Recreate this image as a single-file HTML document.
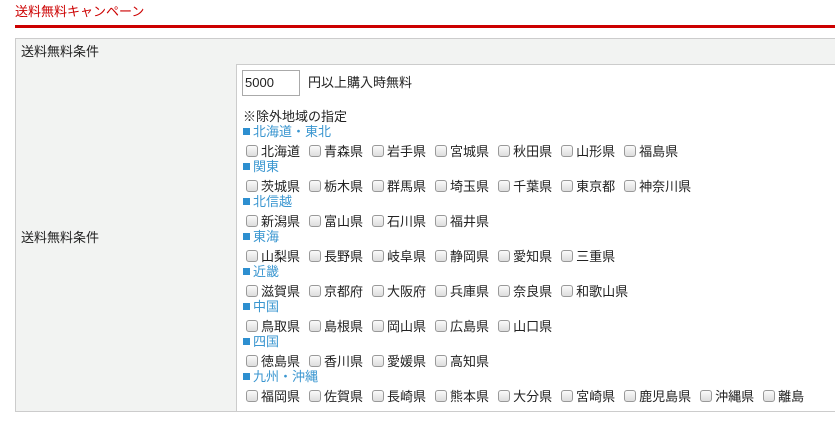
<!DOCTYPE html>
<html><head><meta charset="utf-8"><style>
*{margin:0;padding:0;box-sizing:border-box}
body{width:835px;height:432px;background:#fff;font-family:"Liberation Sans","Noto Sans CJK JP",sans-serif;font-size:13px;color:#222;position:relative;overflow:hidden}
.t{position:absolute;left:15px;top:3px;color:#cc0000;font-size:13px;line-height:18px}
.rl{position:absolute;left:15px;top:25px;width:830px;height:3px;background:#cc0000}
.hd{position:absolute;left:15px;top:38px;width:830px;height:27px;background:#f2f3f2;border:1px solid #ccc;padding:3px 0 0 5px;line-height:19px}
.lc{position:absolute;left:15px;top:64px;width:222px;height:348px;background:#f2f3f2;border:1px solid #ccc;border-top:none}
.lc span{position:absolute;left:5px;top:163px}
.bot{position:absolute;left:236px;top:411px;width:600px;height:1px;background:#ccc}
.inp{position:absolute;left:242px;top:70px;width:58px;height:26px;border:1px solid #aaa;padding:0 0 0 2px;line-height:24px}
.yen{position:absolute;left:308px;top:74px;line-height:18px}
.ex{position:absolute;left:243px;top:109px;line-height:16px}
.rg{position:absolute;left:243px;color:#3a96d0;line-height:15px;font-size:13px}
.rg:before{content:"";display:inline-block;width:7px;height:7px;background:#2d8fd0;margin-right:3px;vertical-align:1px}
.row{position:absolute;left:246px;line-height:18px;white-space:nowrap}
.it{display:inline-block;margin-right:9px}
.cb{display:inline-block;width:12px;height:12px;border:1px solid #999;border-radius:3px;background:linear-gradient(#fafafa,#ddd);vertical-align:-1px;margin-right:3px}
</style></head><body>
<div class="t">送料無料キャンペーン</div>
<div class="rl"></div>
<div class="hd">送料無料条件</div>
<div class="lc"><span>送料無料条件</span></div>
<div class="bot"></div>
<div class="inp">5000</div>
<div class="yen">円以上購入時無料</div>
<div class="ex">※除外地域の指定</div>
<div class="rg" style="top:124px">北海道・東北</div>
<div class="row" style="top:143px"><span class="it"><span class="cb"></span>北海道</span><span class="it"><span class="cb"></span>青森県</span><span class="it"><span class="cb"></span>岩手県</span><span class="it"><span class="cb"></span>宮城県</span><span class="it"><span class="cb"></span>秋田県</span><span class="it"><span class="cb"></span>山形県</span><span class="it"><span class="cb"></span>福島県</span></div>
<div class="rg" style="top:159px">関東</div>
<div class="row" style="top:178px"><span class="it"><span class="cb"></span>茨城県</span><span class="it"><span class="cb"></span>栃木県</span><span class="it"><span class="cb"></span>群馬県</span><span class="it"><span class="cb"></span>埼玉県</span><span class="it"><span class="cb"></span>千葉県</span><span class="it"><span class="cb"></span>東京都</span><span class="it"><span class="cb"></span>神奈川県</span></div>
<div class="rg" style="top:194px">北信越</div>
<div class="row" style="top:213px"><span class="it"><span class="cb"></span>新潟県</span><span class="it"><span class="cb"></span>富山県</span><span class="it"><span class="cb"></span>石川県</span><span class="it"><span class="cb"></span>福井県</span></div>
<div class="rg" style="top:229px">東海</div>
<div class="row" style="top:248px"><span class="it"><span class="cb"></span>山梨県</span><span class="it"><span class="cb"></span>長野県</span><span class="it"><span class="cb"></span>岐阜県</span><span class="it"><span class="cb"></span>静岡県</span><span class="it"><span class="cb"></span>愛知県</span><span class="it"><span class="cb"></span>三重県</span></div>
<div class="rg" style="top:264px">近畿</div>
<div class="row" style="top:283px"><span class="it"><span class="cb"></span>滋賀県</span><span class="it"><span class="cb"></span>京都府</span><span class="it"><span class="cb"></span>大阪府</span><span class="it"><span class="cb"></span>兵庫県</span><span class="it"><span class="cb"></span>奈良県</span><span class="it"><span class="cb"></span>和歌山県</span></div>
<div class="rg" style="top:299px">中国</div>
<div class="row" style="top:318px"><span class="it"><span class="cb"></span>鳥取県</span><span class="it"><span class="cb"></span>島根県</span><span class="it"><span class="cb"></span>岡山県</span><span class="it"><span class="cb"></span>広島県</span><span class="it"><span class="cb"></span>山口県</span></div>
<div class="rg" style="top:334px">四国</div>
<div class="row" style="top:353px"><span class="it"><span class="cb"></span>徳島県</span><span class="it"><span class="cb"></span>香川県</span><span class="it"><span class="cb"></span>愛媛県</span><span class="it"><span class="cb"></span>高知県</span></div>
<div class="rg" style="top:369px">九州・沖縄</div>
<div class="row" style="top:388px"><span class="it"><span class="cb"></span>福岡県</span><span class="it"><span class="cb"></span>佐賀県</span><span class="it"><span class="cb"></span>長崎県</span><span class="it"><span class="cb"></span>熊本県</span><span class="it"><span class="cb"></span>大分県</span><span class="it"><span class="cb"></span>宮崎県</span><span class="it"><span class="cb"></span>鹿児島県</span><span class="it"><span class="cb"></span>沖縄県</span><span class="it"><span class="cb"></span>離島</span></div>
</body></html>
